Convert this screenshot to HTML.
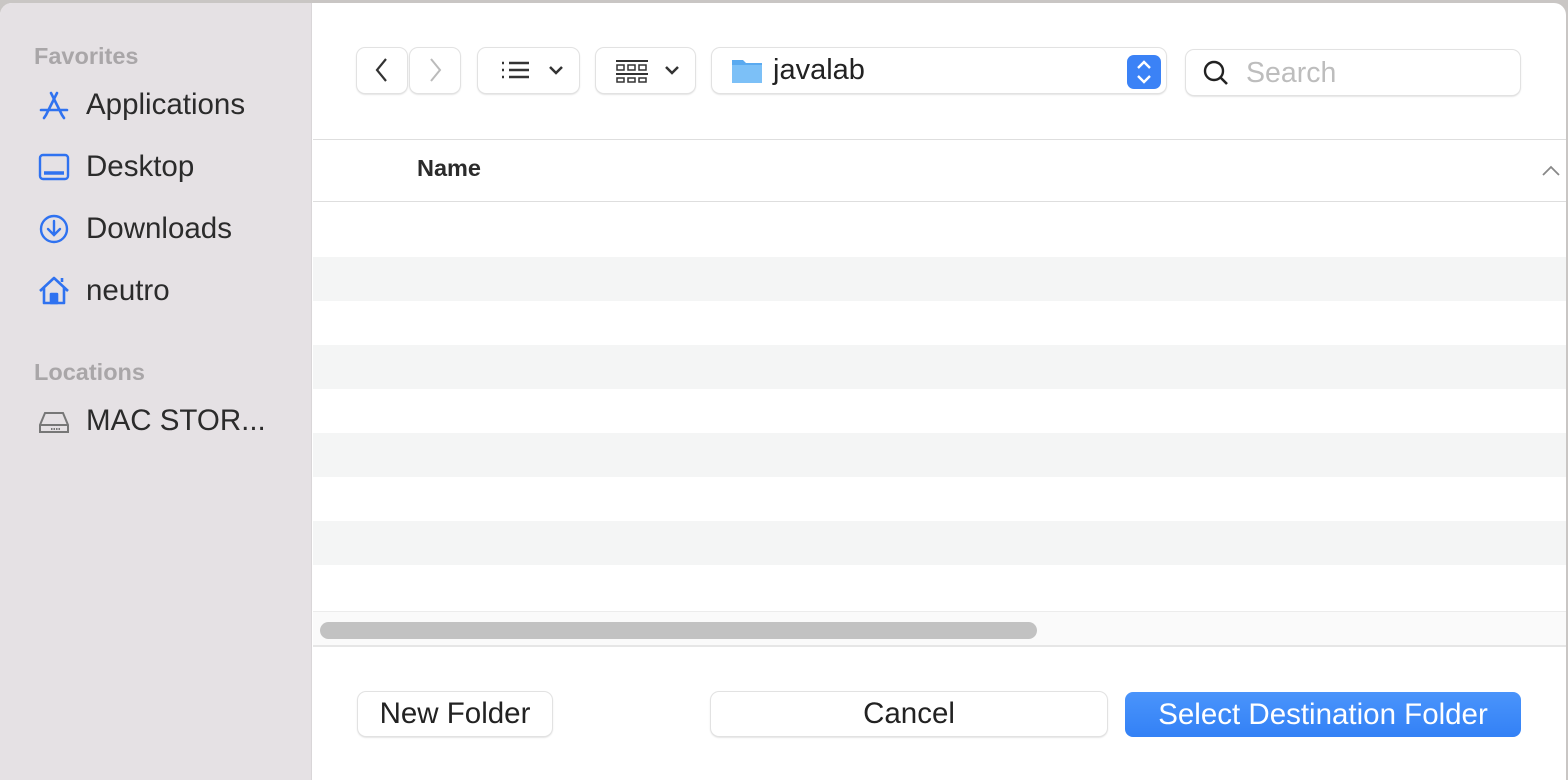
<!DOCTYPE html>
<html><head><meta charset="utf-8"><style>
*{margin:0;padding:0;box-sizing:border-box}
body{width:1568px;height:780px;overflow:hidden;background:#c9c6c4;font-family:"Liberation Sans",sans-serif;position:relative}
.win{position:absolute;left:0;top:3px;width:1566px;height:777px;background:#fff;border-radius:12px 12px 0 0;overflow:hidden}
.side{position:absolute;left:0;top:0;width:312px;height:777px;background:#e5e1e4;border-right:1px solid #d9d6d8}
.hd{position:absolute;left:34px;font-size:23.5px;font-weight:bold;color:#a9a6a8}
.it{position:absolute;left:38px;height:40px;display:flex;align-items:center;font-size:29.5px;color:#2b2b2b}
.it svg{width:32px;height:32px;margin-right:16px}
.btn{position:absolute;background:#fff;border-radius:8px;box-shadow:0 0 0 1px #e2e2e2,0 1px 2px rgba(0,0,0,.25)}
.row{position:absolute;left:313px;right:0;height:44px;background:#f4f5f5}
</style></head><body>
<div class="win">
<div class="side">
<div class="hd" style="top:40px">Favorites</div>
<div class="it" style="top:82px"><svg viewBox="0 0 32 32" fill="none" stroke="#2f72f0" stroke-width="2.6" stroke-linecap="round"><path d="M13 4l11 22M19 4L8 26M3 21h26M8 26l-2 3M24 26l2 3"/></svg>Applications</div>
<div class="it" style="top:144px"><svg viewBox="0 0 32 32" fill="none" stroke="#2f72f0" stroke-width="2.4"><rect x="2" y="4" width="28" height="24" rx="3"/><path d="M6 22h20" stroke-width="3.5"/></svg>Desktop</div>
<div class="it" style="top:206px"><svg viewBox="0 0 32 32" fill="none" stroke="#2f72f0" stroke-width="2.4" stroke-linecap="round"><circle cx="16" cy="16" r="13"/><path d="M16 8v14M10 16l6 6 6-6"/></svg>Downloads</div>
<div class="it" style="top:268px"><svg viewBox="0 0 32 32" fill="none" stroke="#2f72f0" stroke-width="2.6" stroke-linejoin="round"><path d="M2 16L16 3l14 13M6 12v16h20V12M24 7V3"/><rect x="13" y="19" width="6" height="9" fill="#2f72f0"/></svg>neutro</div>
<div class="hd" style="top:356px">Locations</div>
<div class="it" style="top:398px"><svg viewBox="0 0 32 32" fill="none" stroke="#777" stroke-width="2"><path d="M7 8h18l5 12v7H2v-7z M2 20h28"/><path d="M13 24h10" stroke-dasharray="1.5 1"/></svg>MAC STOR...</div>
</div>
<div class="btn" style="left:357px;top:45px;width:50px;height:45px"><svg width="50" height="45"><path d="M29 11l-9 11 9 11" fill="none" stroke="#333" stroke-width="2.2"/></svg></div>
<div class="btn" style="left:410px;top:45px;width:50px;height:45px"><svg width="50" height="45"><path d="M21 11l9 11-9 11" fill="none" stroke="#bbb" stroke-width="2"/></svg></div>
<div class="btn" style="left:478px;top:45px;width:101px;height:45px"><svg width="101" height="45" fill="none" stroke="#333" stroke-width="2"><path d="M24 15h2M24 22h2M24 29h2M31 15h20M31 22h20M31 29h20M72 19l6 6 6-6" stroke-width="2.5"/></svg></div>
<div class="btn" style="left:596px;top:45px;width:99px;height:45px"><svg width="99" height="45" fill="none" stroke="#333" stroke-width="2"><path d="M20 13h32M20 26h32"/><path d="M21 17h7v5h-7zM32 17h7v5h-7zM43 17h7v5h-7zM21 30h7v4h-7zM32 30h7v4h-7zM43 30h7v4h-7z" stroke-width="1.5"/><path d="M70 19l6 6 6-6" stroke-width="2.5"/></svg></div>
<div class="btn" style="left:712px;top:45px;width:454px;height:45px">
<svg width="40" height="45" style="position:absolute;left:18px;top:0"><path d="M2 12h11l3 3h16v20H2z" fill="#5aaaf0"/><path d="M2 17h30v18H2z" fill="#7cc0f7"/></svg>
<div style="position:absolute;left:61px;top:6px;font-size:29px;color:#222">javalab</div>
<div style="position:absolute;left:415px;top:7px;width:34px;height:34px;background:#3b82f6;border-radius:7px"><svg width="34" height="34" fill="none" stroke="#fff" stroke-width="2.4"><path d="M11 13l6-6 6 6M11 21l6 6 6-6"/></svg></div>
</div>
<div class="btn" style="left:1186px;top:47px;width:334px;height:45px">
<svg width="40" height="45" style="position:absolute;left:12px"><circle cx="16" cy="21" r="9" fill="none" stroke="#222" stroke-width="2.4"/><path d="M22 27l7 7" stroke="#222" stroke-width="2.6"/></svg>
<div style="position:absolute;left:60px;top:7px;font-size:28.5px;color:#bdbdbd">Search</div>
</div>
<div style="position:absolute;left:313px;right:0;top:136px;height:1px;background:#dedede"></div>
<div style="position:absolute;left:417px;top:152px;font-size:23.5px;font-weight:bold;color:#2b2b2b">Name</div>
<svg style="position:absolute;left:1540px;top:160px" width="22" height="16"><path d="M3 12l8-8 8 8" fill="none" stroke="#888" stroke-width="1.8"/></svg>
<div style="position:absolute;left:313px;right:0;top:198px;height:1px;background:#dedede"></div>
<div class="row" style="top:254px"></div>
<div class="row" style="top:342px"></div>
<div class="row" style="top:430px"></div>
<div class="row" style="top:518px"></div>
<div style="position:absolute;left:313px;right:0;top:608px;height:36px;background:#fafafa;border-top:1px solid #ececec;border-bottom:2px solid #e6e6e6"></div>
<div style="position:absolute;left:320px;top:619px;width:717px;height:17px;background:#c2c2c2;border-radius:9px"></div>
<div class="btn" style="left:358px;top:689px;width:194px;height:44px;text-align:center;font-size:29.5px;line-height:44px;color:#222">New Folder</div>
<div class="btn" style="left:711px;top:689px;width:396px;height:44px;text-align:center;font-size:29.5px;line-height:44px;color:#222">Cancel</div>
<div style="position:absolute;left:1125px;top:689px;width:396px;height:45px;border-radius:8px;background:linear-gradient(#4a94fb,#3381f6);text-align:center;font-size:29.5px;line-height:45px;color:#fff">Select Destination Folder</div>
</div>
</body></html>
